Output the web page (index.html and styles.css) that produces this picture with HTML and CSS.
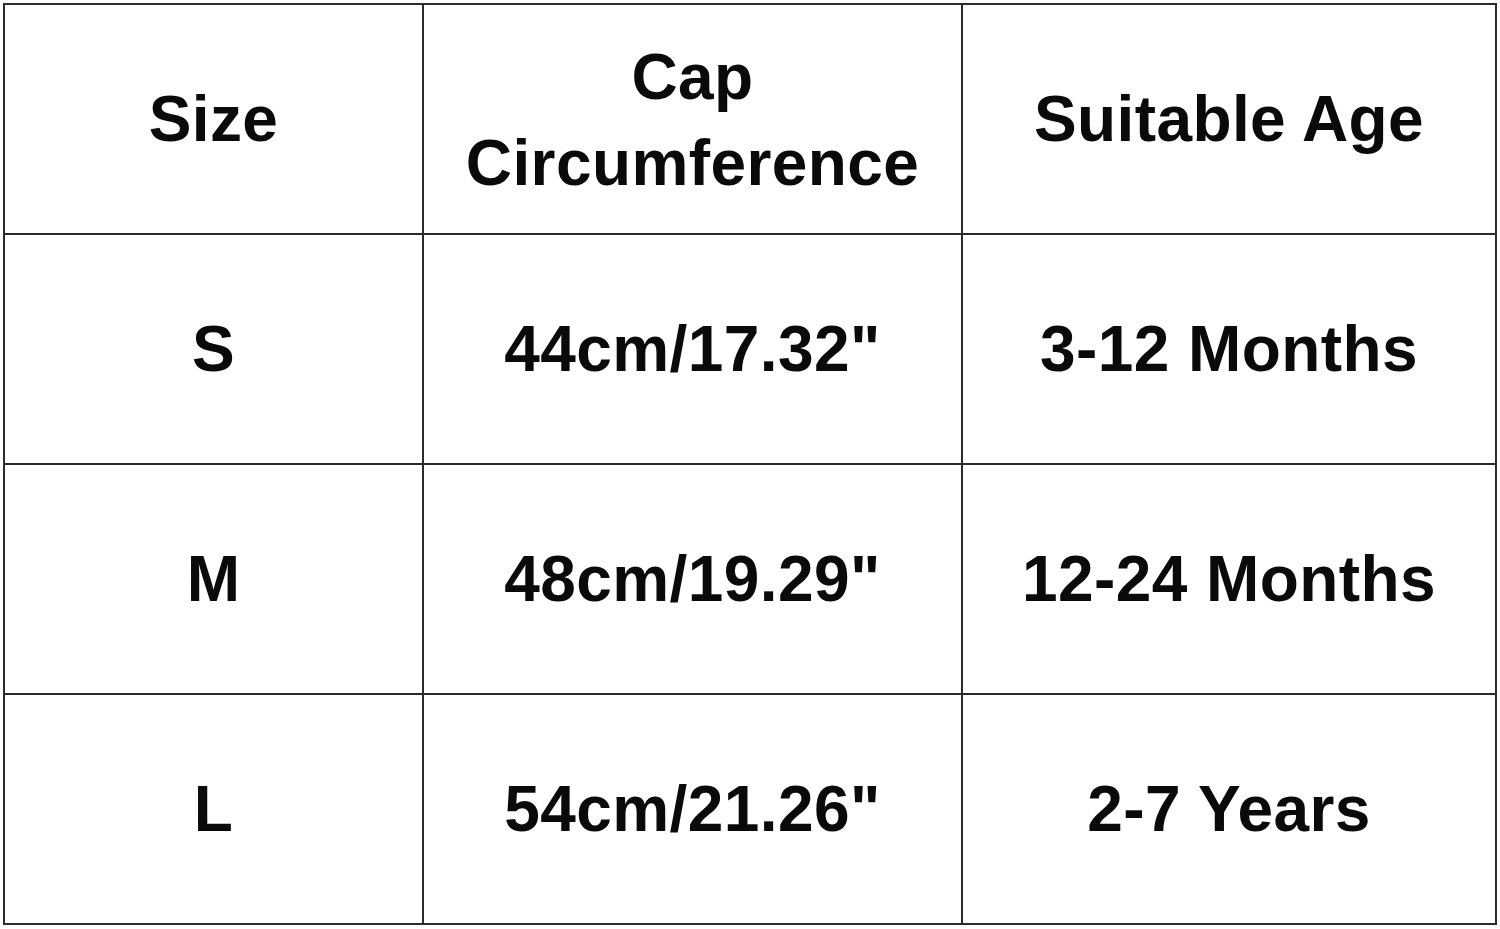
FILE: index.html
```html
<!DOCTYPE html>
<html lang="en">
<head>
<meta charset="utf-8">
<title>Size Chart</title>
<link rel="stylesheet" href="styles.css">
</head>
<body>
<div class="chart">
  <div class="cell">Size</div>
  <div class="cell head2">Cap<br>Circumference</div>
  <div class="cell">Suitable Age</div>
  <div class="cell">S</div>
  <div class="cell">44cm/17.32"</div>
  <div class="cell">3-12 Months</div>
  <div class="cell">M</div>
  <div class="cell">48cm/19.29"</div>
  <div class="cell">12-24 Months</div>
  <div class="cell">L</div>
  <div class="cell">54cm/21.26"</div>
  <div class="cell">2-7 Years</div>
</div>
</body>
</html>
```

FILE: styles.css
```css
html, body {
  margin: 0;
  padding: 0;
  background: #ffffff;
}
body {
  width: 1500px;
  height: 929px;
  overflow: hidden;
}
.chart {
  margin: 3px 0 0 3px;
  width: 1494px;
  box-sizing: border-box;
  padding: 2px;
  background: #2b2b2b;
  display: grid;
  grid-template-columns: 417px 537px 532px;
  grid-template-rows: repeat(4, 228px);
  gap: 2px;
}
.cell {
  background: #ffffff;
  display: flex;
  align-items: center;
  justify-content: center;
  text-align: center;
  font-family: "Liberation Sans", Arial, sans-serif;
  font-weight: bold;
  font-size: 64px;
  letter-spacing: 0.4px;
  color: #0a0a0a;
  line-height: 1.15;
  padding-top: 2px;
}
.head2 {
  line-height: 86px;
}
```
